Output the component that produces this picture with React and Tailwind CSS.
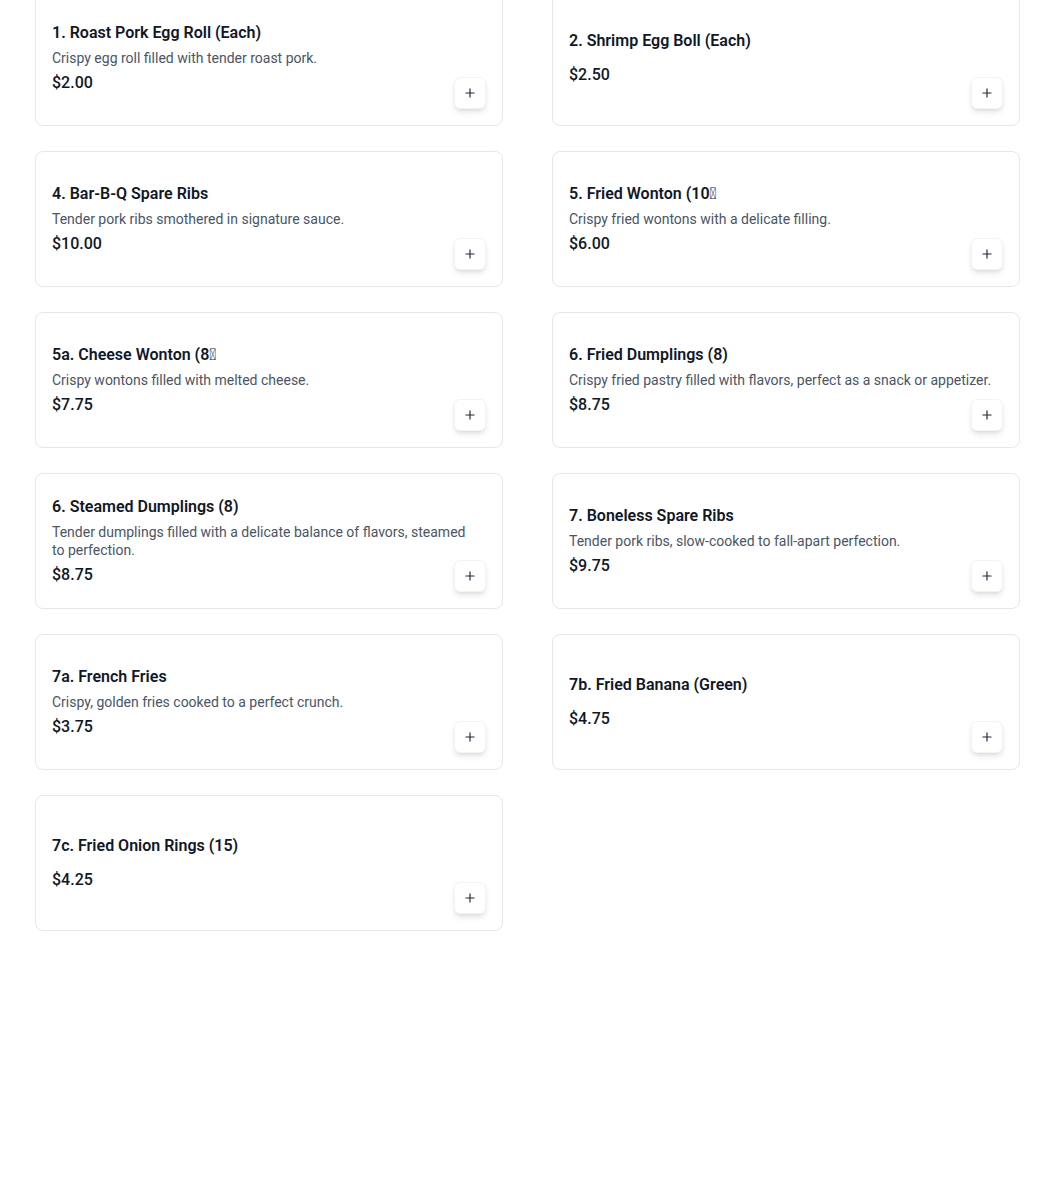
import { Plus } from 'lucide-react';

const items = [
  { name: '1. Roast Pork Egg Roll (Each)', desc: 'Crispy egg roll filled with tender roast pork.', price: '$2.00' },
  { name: '2. Shrimp Egg Boll (Each)', price: '$2.50' },
  { name: '4. Bar-B-Q Spare Ribs', desc: 'Tender pork ribs smothered in signature sauce.', price: '$10.00' },
  { name: '5. Fried Wonton (10\uE000', desc: 'Crispy fried wontons with a delicate filling.', price: '$6.00' },
  { name: '5a. Cheese Wonton (8\uE000', desc: 'Crispy wontons filled with melted cheese.', price: '$7.75' },
  { name: '6. Fried Dumplings (8)', desc: 'Crispy fried pastry filled with flavors, perfect as a snack or appetizer.', price: '$8.75' },
  { name: '6. Steamed Dumplings (8)', desc: 'Tender dumplings filled with a delicate balance of flavors, steamed to perfection.', price: '$8.75' },
  { name: '7. Boneless Spare Ribs', desc: 'Tender pork ribs, slow-cooked to fall-apart perfection.', price: '$9.75' },
  { name: '7a. French Fries', desc: 'Crispy, golden fries cooked to a perfect crunch.', price: '$3.75' },
  { name: '7b. Fried Banana (Green)', price: '$4.75' },
  { name: '7c. Fried Onion Rings (15)', price: '$4.25' },
];

function MenuCard({ item }) {
  return (
    <div className="relative flex h-[136px] flex-col justify-center rounded-lg border border-gray-200 bg-white p-4">
      <h3 className={`text-base leading-6 font-semibold text-gray-900 ${item.desc ? 'mb-[5px]' : 'mb-2.5'}`}>
        {item.name}
      </h3>
      {item.desc && (
        <p className="mb-1 pr-2 text-sm leading-[17.5px] text-gray-600">{item.desc}</p>
      )}
      <span className="text-base leading-6 font-medium text-gray-900">{item.price}</span>

      {/* add button */}
      <button className="absolute right-4 bottom-4 flex h-8 w-8 items-center justify-center rounded-md border border-gray-100 bg-white shadow-md">
        <Plus size={14} strokeWidth={2} className="text-gray-800" />
      </button>
    </div>
  );
}

export default function App() {
  return (
    <div className="min-h-[1180px] bg-white font-['Roboto',sans-serif]">
      <div className="-mt-[10px] grid grid-cols-2 gap-x-[49px] gap-y-[25px] pr-[30px] pl-[35px]">
        {items.map((item) => (
          <MenuCard key={item.name + item.price} item={item} />
        ))}
      </div>
    </div>
  );
}
